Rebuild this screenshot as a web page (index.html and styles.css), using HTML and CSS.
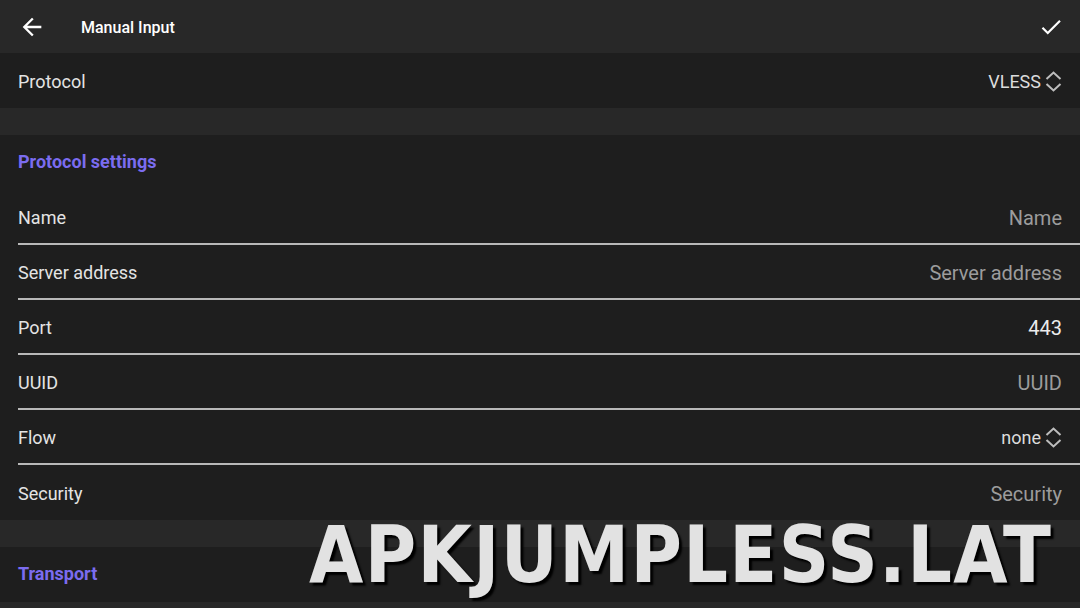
FILE: index.html
```html
<!DOCTYPE html>
<html>
<head>
    <meta charset="utf-8">
    <title>Manual Input</title>
    <link rel="stylesheet" href="styles.css">
</head>
<body>
    <div class="screen">
        <header class="toolbar">
            <svg class="tb-icon" width="28" height="28" viewBox="0 0 24 24">
                <path d="M20 11H7.830l5.59-5.59L12 4l-8 8 8 8 1.41-1.41L7.83 13H20v-2z" fill="#fff"/>
            </svg>
            <span class="tb-title">Manual Input</span>
            <svg class="tb-icon" width="26" height="26" viewBox="0 0 24 24">
                <path d="M9 16.17L4.83 12l-1.42 1.41L9 19 21 7l-1.41-1.41z" fill="#fff"/>
            </svg>
        </header>

        <div class="group">
            <div class="row last">
                <span class="label">Protocol</span>
                <span class="value picker">VLESS
                    <svg width="17" height="22" viewBox="0 0 17 22">
                        <polyline points="1.5,8 8.5,1.5 15.5,8" fill="none" stroke="#bdbdbd" stroke-width="2"/>
                        <polyline points="1.5,13 8.5,19.5 15.5,13" fill="none" stroke="#bdbdbd" stroke-width="2"/>
                    </svg>
                </span>
            </div>
        </div>

        <div class="group">
            <div class="section-title">Protocol settings</div>
            <div class="row">
                <span class="label">Name</span>
                <span class="value hint">Name</span>
            </div>
            <div class="row">
                <span class="label">Server address</span>
                <span class="value hint">Server address</span>
            </div>
            <div class="row">
                <span class="label">Port</span>
                <span class="value">443</span>
            </div>
            <div class="row">
                <span class="label">UUID</span>
                <span class="value hint">UUID</span>
            </div>
            <div class="row">
                <span class="label">Flow</span>
                <span class="value picker">none
                    <svg width="17" height="22" viewBox="0 0 17 22">
                        <polyline points="1.5,8 8.5,1.5 15.5,8" fill="none" stroke="#bdbdbd" stroke-width="2"/>
                        <polyline points="1.5,13 8.5,19.5 15.5,13" fill="none" stroke="#bdbdbd" stroke-width="2"/>
                    </svg>
                </span>
            </div>
            <div class="row last">
                <span class="label">Security</span>
                <span class="value hint">Security</span>
            </div>
        </div>

        <div class="group">
            <div class="section-title">Transport</div>
        </div>

        <div class="stamp">APKJUMPLESS.LAT</div>
    </div>
</body>
</html>
```

FILE: styles.css
```css
body {
    margin: 0;
    background: #282828;
    font-family: Roboto, "Noto Sans", sans-serif;
}
.screen {
    position: relative;
    width: 1080px;
    height: 608px;
    overflow: hidden;
    background: #282828;
}
.toolbar {
    display: flex;
    align-items: center;
    height: 52px;
    padding: 1px 16px 0 18px;
    background: #282828;
}
.tb-title {
    margin-left: 35px;
    color: #fff;
    font-size: 16px;
    font-weight: 500;
    flex: 1;
}
.group {
    background: #1e1e1e;
    margin-bottom: 27px;
}
.section-title {
    height: 55px;
    line-height: 54px;
    padding-left: 18px;
    color: #7b6cf0;
    font-size: 18px;
    font-weight: 700;
}
.row {
    display: flex;
    align-items: center;
    justify-content: space-between;
    box-sizing: border-box;
    height: 55px;
    padding-top: 2px;
    margin-left: 18px;
    padding-right: 18px;
    border-bottom: 2px solid #b8b8b8;
}
.row.last {
    border-bottom: none;
}
.label {
    color: #e4e4e4;
    font-size: 18px;
}
.value {
    color: #ececec;
    font-size: 20px;
}
.hint {
    color: #9c9c9c;
}
.picker {
    display: flex;
    align-items: center;
    gap: 4px;
    font-size: 18px;
    color: #dcdcdc;
}
.stamp {
    position: absolute;
    left: 309px;
    top: 510px;
    font-family: "DejaVu Sans", sans-serif;
    font-stretch: condensed;
    font-weight: 700;
    font-size: 78px;
    line-height: 90px;
    letter-spacing: 1.4px;
    color: #e2e2e2;
    text-shadow: 3px 3px 2px #000;
}
```
